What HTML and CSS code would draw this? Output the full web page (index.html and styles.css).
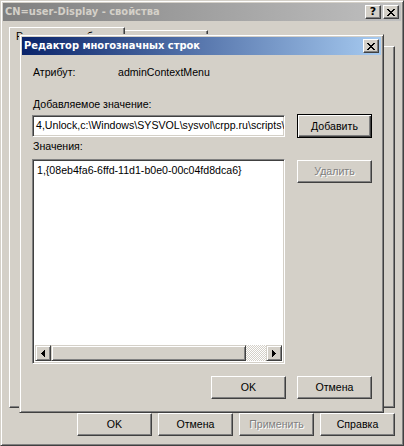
FILE: index.html
```html
<!DOCTYPE html>
<html lang="ru">
<head>
<meta charset="utf-8">
<title>CN=user-Display - свойства</title>
<link rel="stylesheet" href="styles.css">
</head>
<body>
<div class="win">
  <div class="title inactive">
    <span class="ttext">CN=user-Display - свойства</span>
    <button class="tb help">?</button>
    <button class="tb xbtn"><svg width="8" height="7" viewBox="0 0 8 7" shape-rendering="crispEdges"><path d="M0 0h2v1H0z M6 0h2v1H6z M1 1h2v1H1z M5 1h2v1H5z M2 2h4v1H2z M3 3h2v1H3z M2 4h4v1H2z M1 5h2v1H1z M5 5h2v1H5z M0 6h2v1H0z M6 6h2v1H6z" fill="#000"/></svg></button>
  </div>
  <div class="tabs">
    <div class="tab sel">Редактор атрибутов</div>
    <div class="tab second">Безопасность</div>
  </div>
  <div class="panel"></div>
  <div class="btnrow">
    <button class="btn">OK</button>
    <button class="btn">Отмена</button>
    <button class="btn" disabled>Применить</button>
    <button class="btn">Справка</button>
  </div>
</div>

<div class="dlg">
  <div class="title active">
    <span class="ttext">Редактор многозначных строк</span>
    <button class="tb dclose"><svg width="8" height="7" viewBox="0 0 8 7" shape-rendering="crispEdges"><path d="M0 0h2v1H0z M6 0h2v1H6z M1 1h2v1H1z M5 1h2v1H5z M2 2h4v1H2z M3 3h2v1H3z M2 4h4v1H2z M1 5h2v1H1z M5 5h2v1H5z M0 6h2v1H0z M6 6h2v1H6z" fill="#000"/></svg></button>
  </div>
  <div class="dbody">
    <div class="attr"><span class="alabel">Атрибут:</span><span>adminContextMenu</span></div>
    <div class="lab2">Добавляемое значение:</div>
    <div class="row1">
      <div class="edit">4,Unlock,c:\Windows\SYSVOL\sysvol\crpp.ru\scripts\unlock.vbs</div>
      <button class="btn def">Добавить</button>
    </div>
    <div class="lab3">Значения:</div>
    <div class="row2">
      <div class="list">
        <div class="items"><div class="item">1,{08eb4fa6-6ffd-11d1-b0e0-00c04fd8dca6}</div></div>
        <div class="hscroll">
          <div class="sbtn"><svg width="4" height="7" viewBox="0 0 4 7" shape-rendering="crispEdges"><path d="M3 0h1v7H3z M2 1h1v5H2z M1 2h1v3H1z M0 3h1v1H0z" fill="#000"/></svg></div>
          <div class="thumb"></div>
          <div class="track"></div>
          <div class="sbtn"><svg width="4" height="7" viewBox="0 0 4 7" shape-rendering="crispEdges"><path d="M0 0h1v7H0z M1 1h1v5H1z M2 2h1v3H2z M3 3h1v1H3z" fill="#000"/></svg></div>
        </div>
      </div>
      <button class="btn del" disabled>Удалить</button>
    </div>
    <div class="row3">
      <button class="btn">OK</button>
      <button class="btn">Отмена</button>
    </div>
  </div>
</div>
</body>
</html>
```

FILE: styles.css
```css
* { box-sizing: border-box; }
html, body { margin: 0; padding: 0; }
body {
  width: 404px;
  height: 446px;
  background: #d4d0c8;
  font: 10.6px/13px "Liberation Sans", Arial, sans-serif;
  color: #000;
  position: relative;
  overflow: hidden;
}
button { font: inherit; margin: 0; }

/* outer property sheet window */
.win {
  width: 404px;
  height: 446px;
  display: flex;
  flex-direction: column;
  border: 1px solid;
  border-color: #d4d0c8 #404040 #404040 #d4d0c8;
  box-shadow: inset 1px 1px #fff, inset -1px -1px #808080;
  padding: 2px;
}

.title {
  height: 18px;
  flex: none;
  display: flex;
  align-items: flex-start;
  padding-left: 2px;
  font: bold 11px/18px "DejaVu Sans Condensed", "Liberation Sans", sans-serif;
}
.title.inactive { background: linear-gradient(to right, #808080, #c0c0c0); color: #d4d0c8; }
.title.active { background: linear-gradient(to right, #0a246a, #a6caf0); color: #fff; }
.ttext { flex: 1; white-space: nowrap; overflow: hidden; }

.tb {
  width: 16px;
  height: 14px;
  margin-top: 2px;
  padding: 0;
  background: #d4d0c8;
  border: 1px solid;
  border-color: #fff #404040 #404040 #fff;
  box-shadow: inset -1px -1px #808080, inset 1px 1px #d4d0c8;
  display: flex;
  align-items: center;
  justify-content: center;
  flex: none;
}
.tb.help { font: bold 11px/12px "DejaVu Sans", sans-serif; color: #000; }
.tb.xbtn { margin-left: 2px; margin-right: 2px; }
.tb.dclose { margin-right: 2px; }

.tabs {
  display: flex;
  margin: 6px 6px 0;
  height: 19px;
  flex: none;
  position: relative;
  z-index: 1;
}
.tab {
  height: 16px;
  margin-top: 3px;
  border: 1px solid;
  border-bottom: 0;
  border-color: #fff #404040 transparent #fff;
  box-shadow: inset -1px 0 #808080;
  background: #d4d0c8;
  padding: 2px 6px 0;
  white-space: nowrap;
  overflow: hidden;
}
.tab.sel { width: 116px; height: 20px; margin-top: 0; padding-top: 2px; }
.tab.second { width: 83px; border-left: 0; }

.panel {
  flex: 1;
  margin: 0 6px;
  border: 1px solid;
  border-color: #fff #404040 #404040 #fff;
  box-shadow: inset -1px -1px #808080;
}

.btnrow {
  display: flex;
  justify-content: flex-end;
  gap: 6px;
  margin: 5px 6px 7px;
  flex: none;
}

.btn {
  width: 75px;
  height: 23px;
  padding: 0;
  background: #d4d0c8;
  border: 1px solid;
  border-color: #fff #404040 #404040 #fff;
  box-shadow: inset -1px -1px #808080, inset 1px 1px #d4d0c8;
  color: #000;
  flex: none;
}
.btn.def {
  height: 24px;
  border-color: #000;
  box-shadow: inset 1px 1px #fff, inset -1px -1px #404040, inset -2px -2px #808080;
}
.btn:disabled { color: #808080; text-shadow: 1px 1px 0 #fff; }

/* modal editor dialog, lying over the property sheet */
.dlg {
  position: absolute;
  z-index: 10;
  left: 19px;
  top: 34px;
  width: 365px;
  height: 379px;
  background: #d4d0c8;
  border: 1px solid;
  border-color: #d4d0c8 #404040 #404040 #d4d0c8;
  box-shadow: inset 1px 1px #fff, inset -1px -1px #808080;
  padding: 2px;
  display: flex;
  flex-direction: column;
}
.dbody { padding: 0 9px 0 10px; }

.attr { margin-top: 11px; display: flex; white-space: nowrap; }
.alabel { width: 86px; padding-left: 1px; }
.lab2 { margin-top: 19px; padding-left: 1px; }
.lab3 { margin-top: 2px; padding-left: 1px; }

.row1 {
  margin-top: 3px;
  display: grid;
  grid-template-columns: 253px 75px;
  column-gap: 12px;
  align-items: start;
}
.edit {
  margin-top: 1px;
  height: 22px;
  background: #fff;
  border: 1px solid;
  border-color: #808080 #fff #fff #808080;
  box-shadow: inset 1px 1px #404040, inset -1px -1px #d4d0c8;
  padding: 3px 2px 0 3px;
  white-space: nowrap;
  overflow: hidden;
}

.row2 {
  margin-top: 6px;
  display: grid;
  grid-template-columns: 253px 75px;
  column-gap: 12px;
  align-items: start;
}
.list {
  height: 205px;
  background: #fff;
  border: 1px solid;
  border-color: #808080 #fff #fff #808080;
  box-shadow: inset 1px 1px #404040, inset -1px -1px #d4d0c8;
  padding: 2px;
  display: flex;
  flex-direction: column;
}
.items { flex: 1; }
.item { padding: 2px 2px 0 2px; white-space: nowrap; }
.del { margin-top: 1px; }

.hscroll { height: 16px; display: flex; flex: none; }
.sbtn, .thumb {
  height: 16px;
  background: #d4d0c8;
  border: 1px solid;
  border-color: #d4d0c8 #404040 #404040 #d4d0c8;
  box-shadow: inset 1px 1px #fff, inset -1px -1px #808080;
}
.sbtn { width: 16px; display: flex; align-items: center; justify-content: center; }
.thumb { width: 195px; }
.track {
  flex: 1;
  background-image: repeating-conic-gradient(#fff 0 25%, #d4d0c8 0 50%);
  background-size: 2px 2px;
}

.row3 {
  margin-top: 12px;
  display: flex;
  justify-content: flex-end;
  gap: 11px;
}
```
